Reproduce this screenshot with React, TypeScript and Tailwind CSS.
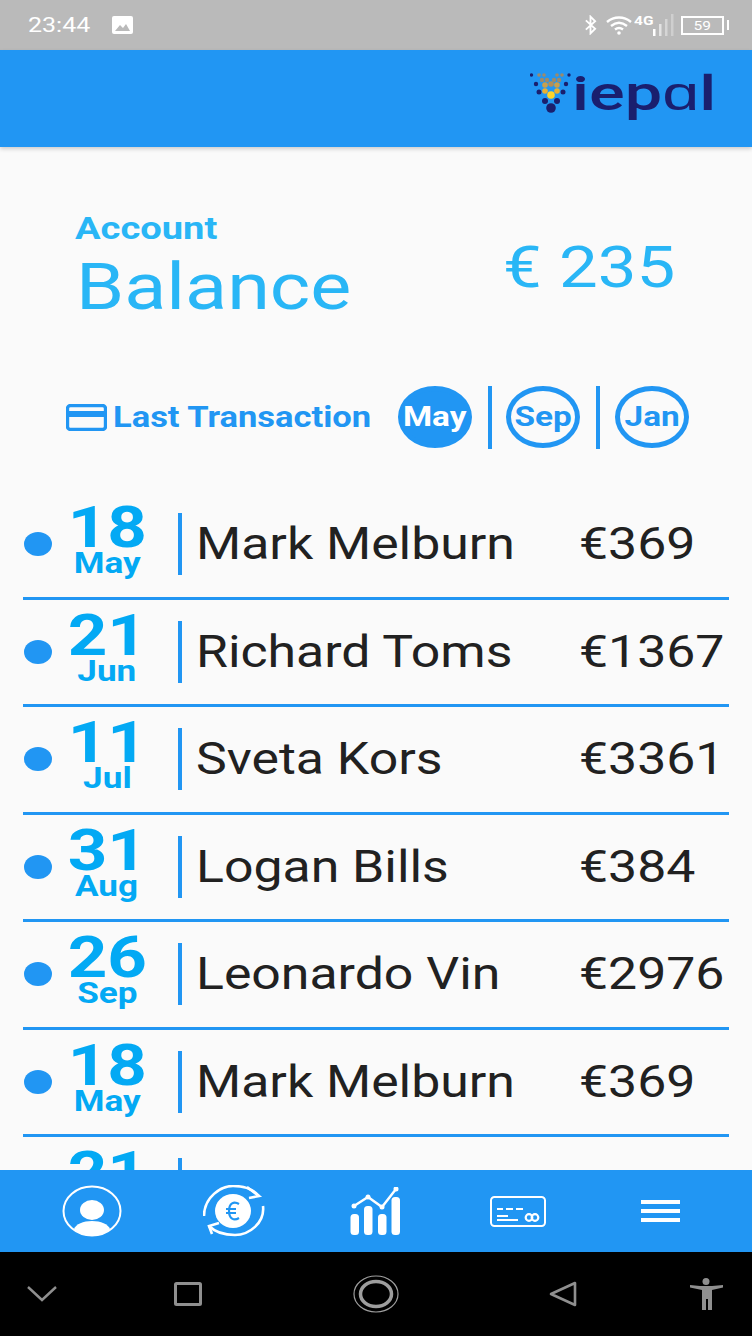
import React from 'react';

const rows = [
  { day: '18', month: 'May', name: 'Mark Melburn', amount: '€369' },
  { day: '21', month: 'Jun', name: 'Richard Toms', amount: '€1367' },
  { day: '11', month: 'Jul', name: 'Sveta Kors', amount: '€3361' },
  { day: '31', month: 'Aug', name: 'Logan Bills', amount: '€384' },
  { day: '26', month: 'Sep', name: 'Leonardo Vin', amount: '€2976' },
  { day: '18', month: 'May', name: 'Mark Melburn', amount: '€369' },
  { day: '21', month: 'Jun', name: 'Richard Toms', amount: '€1367' },
];

// the whole screenshot is stretched sideways, so the text is too
const Wide: React.FC<{ children: React.ReactNode; center?: boolean }> = ({ children, center }) => (
  <span className={`inline-block scale-x-[1.19] whitespace-nowrap ${center ? 'origin-center' : 'origin-left'}`}>
    {children}
  </span>
);

const StatusIcons = () => (
  <div className="flex items-center">
    <svg width="13" height="20" viewBox="0 0 14 20" fill="none" stroke="white" strokeWidth="2">
      <path d="M2 5l10 9-5 5V1l5 5L2 15" />
    </svg>
    <svg className="ml-[9px]" width="26" height="20" viewBox="0 0 26 20" fill="none" stroke="white" strokeWidth="2.400">
      <path d="M1 7c7-6 17-6 24 0M5 11c5-4 11-4 16 0M9 14.500c2.500-2 5.500-2 8 0" />
      <circle cx="13" cy="18" r="1.800" fill="white" stroke="none" />
    </svg>
    <span className="mb-[10px] ml-[2px] w-[18px] text-[13px] leading-none font-bold text-white"><Wide>4G</Wide></span>
    <svg className="ml-[1px]" width="21" height="22" viewBox="0 0 21 22" fill="white">
      <rect x="0" y="15" width="2.500" height="7" />
      <rect x="6" y="10" width="2.500" height="12" opacity=".6" />
      <rect x="12" y="5" width="2.500" height="17" opacity=".4" />
      <rect x="18" y="0" width="2.500" height="22" opacity=".3" />
    </svg>
    <div className="ml-[7px] flex h-[19px] w-[43px] items-center justify-center border-2 border-white">
      <span className="text-[13px] leading-none text-white"><Wide center>59</Wide></span>
    </div>
    <div className="ml-[3px] h-[10px] w-[2px] bg-white" />
  </div>
);

const Logo = () => (
  <div className="flex items-start">
    <svg className="mt-[4px]" width="44" height="42" viewBox="0 0 44 42">
      <g fill="#9c8a6a">
        <circle cx="9" cy="3" r="1.800" /><circle cx="14" cy="3" r="1.800" /><circle cx="27" cy="3" r="1.800" /><circle cx="32" cy="3" r="1.800" />
        <circle cx="12" cy="8" r="2.200" /><circle cx="17" cy="8" r="2.200" /><circle cx="24" cy="8" r="2.200" /><circle cx="29" cy="8" r="2.200" />
      </g>
      <circle cx="15" cy="13" r="2.800" fill="#c9a04a" /><circle cx="21" cy="12" r="2.800" fill="#b08f5a" /><circle cx="27" cy="13" r="2.800" fill="#c9a04a" />
      <circle cx="15" cy="19" r="2.800" fill="#e8b030" /><circle cx="27" cy="19" r="2.800" fill="#e8b030" />
      <circle cx="21" cy="23" r="3.800" fill="#ffd428" />
      <g fill="#1a1f6e">
        <circle cx="1.500" cy="3" r="1.700" /><circle cx="6" cy="12" r="2.200" /><circle cx="36" cy="12" r="2.200" /><circle cx="39" cy="3" r="1.700" />
        <circle cx="9" cy="20" r="2.500" /><circle cx="33" cy="20" r="2.500" />
        <circle cx="15" cy="29" r="3" /><circle cx="27" cy="29" r="3" />
        <circle cx="21" cy="36" r="4.800" />
      </g>
    </svg>
    <span className="-ml-[2px] w-[142px] text-[49px] leading-[52px] font-medium text-[#1a1f6e]">
      <span className="inline-block origin-left scale-x-[1.36]">iepɑl</span>
    </span>
  </div>
);

const MonthBadge: React.FC<{ label: string; active?: boolean }> = ({ label, active }) => (
  <div
    className={`flex h-[62px] w-[74px] shrink-0 items-center justify-center rounded-[50%] border-[5px] border-[#2196f3] text-[28px] font-bold ${
      active ? 'bg-[#2196f3] text-white' : 'text-[#2196f3]'
    }`}
  >
    <Wide center>{label}</Wide>
  </div>
);

const TxRow: React.FC<(typeof rows)[number]> = ({ day, month, name, amount }) => (
  <div className="mx-[23px] flex h-[107.500px] shrink-0 border-b-[3px] border-[#2196f3]">
    <div className="mt-[40px] ml-[1px] h-[24px] w-[28px] shrink-0 rounded-[50%] bg-[#2196f3]" />
    <div className="mt-[13px] flex w-[126px] shrink-0 flex-col items-center pr-[18px] pl-[2px] text-[#03a9f4]">
      <span className="text-[58px] leading-[44px] font-bold"><Wide center>{day}</Wide></span>
      <span className="text-[29.500px] leading-[28px] font-bold"><Wide center>{month}</Wide></span>
    </div>
    <div className="mt-[21px] h-[62px] w-[4px] shrink-0 bg-[#2196f3]" />
    <div className="mt-[27px] ml-[14px] w-[383px] shrink-0 text-[43.500px] leading-[52px] text-[#212121]">
      <Wide>{name}</Wide>
    </div>
    <div className="mt-[27px] text-[43.500px] leading-[52px] text-[#212121]">
      <Wide>{amount}</Wide>
    </div>
  </div>
);

const NavIcons = () => (
  <div className="grid h-[82px] shrink-0 grid-cols-5 bg-[#2196f3] px-[21px]">
    <div className="flex items-center justify-center">
      <svg width="60" height="52" viewBox="0 0 60 52">
        <ellipse cx="30" cy="26" rx="28.500" ry="24.500" fill="none" stroke="white" strokeWidth="2" />
        <ellipse cx="30" cy="25" rx="12" ry="10" fill="white" />
        <path d="M12 44c2-5 9-8 18-8s16 3 18 8c-4 4-11 7-18 7s-14-3-18-7z" fill="white" />
      </svg>
    </div>
    <div className="flex items-center justify-center">
      <svg width="62" height="52" viewBox="0 0 62 52" fill="none" stroke="white" strokeWidth="2.600">
        <ellipse cx="30" cy="26" rx="18" ry="17" fill="white" stroke="none" />
        <path d="M36 19c-5-3-10-1-10 7s5 10 10 7M23 24h10M23 28h10" stroke="#2196f3" strokeWidth="2.200" />
        <path d="M1 31C1 12 18 1 30 1c10 0 20 3 26 10" />
        <path d="M44 2l12 9-10 2" />
        <path d="M60 21c2 17-14 29-28 29-10 0-20-3-26-9" />
        <path d="M16 38L6 41l3 8" />
      </svg>
    </div>
    <div className="flex items-center justify-center">
      <svg width="52" height="48" viewBox="0 0 52 48" fill="white">
        <rect x="0.500" y="27" width="8.500" height="21" rx="3.500" />
        <rect x="14" y="19" width="8.500" height="29" rx="3.500" />
        <rect x="28" y="27" width="8.500" height="21" rx="3.500" />
        <rect x="41.500" y="10" width="8.500" height="38" rx="3.500" />
        <path d="M4 19l14-9 14 10 14-18" fill="none" stroke="white" strokeWidth="2.400" />
        <circle cx="4" cy="19" r="2.500" /><circle cx="18" cy="10" r="2.500" /><circle cx="32" cy="20" r="2.500" /><circle cx="46" cy="2" r="2.500" />
      </svg>
    </div>
    <div className="flex items-center justify-center">
      <svg width="56" height="31" viewBox="0 0 56 31" fill="none" stroke="white">
        <rect x="1" y="1" width="54" height="29" rx="3.500" strokeWidth="2" />
        <path d="M7 13h6M16 13h7M26 13h7" strokeWidth="1.800" />
        <path d="M7 20h11M7 24h21" strokeWidth="2" />
        <circle cx="39" cy="21.500" r="3.300" strokeWidth="2.200" />
        <circle cx="45" cy="21.500" r="3.300" strokeWidth="2.200" />
      </svg>
    </div>
    <div className="flex items-center justify-center">
      <div className="flex w-[39px] flex-col gap-[5px]">
        <div className="h-[4px] bg-white" />
        <div className="h-[4px] bg-white" />
        <div className="h-[4px] bg-white" />
      </div>
    </div>
  </div>
);

export default function App() {
  return (
    <div className="flex h-[1336px] w-[752px] flex-col overflow-hidden bg-[#fafafa] font-['Roboto',sans-serif]">
      {/* status bar */}
      <div className="flex h-[50px] shrink-0 items-center justify-between bg-[#bababa] pr-[23px] pl-[28px]">
        <div className="flex items-center">
          <span className="w-[84px] text-[21px] leading-none text-white"><Wide>23:44</Wide></span>
          <svg width="21" height="18" viewBox="0 0 21 18">
            <rect width="21" height="18" rx="2" fill="white" />
            <path d="M3 15l5-6 3 3 3-4 4 7z" fill="#bababa" />
          </svg>
        </div>
        <StatusIcons />
      </div>

      {/* header */}
      <div className="z-10 flex h-[97px] shrink-0 items-start justify-end bg-[#2196f3] pt-[18px] pr-[38px] shadow-[0_2px_4px_rgba(0,0,0,0.18)]">
        <Logo />
      </div>

      {/* balance */}
      <div className="flex h-[239px] shrink-0 pt-[63px] pl-[75px]">
        <div className="w-[428px] text-[#29b6f6]">
          <div className="text-[32px] leading-[36px] font-bold"><Wide>Account</Wide></div>
          <div className="mt-[7px] ml-[1px] text-[65px] leading-[68px]"><Wide>Balance</Wide></div>
        </div>
        <div className="mt-[25px] text-[58px] leading-[64px] text-[#29b6f6]"><Wide>€ 235</Wide></div>
      </div>

      {/* last transaction header */}
      <div className="flex h-[62px] shrink-0 items-center pl-[66px]">
        <svg width="41" height="27" viewBox="0 0 41 27">
          <rect x="1.500" y="1.500" width="38" height="24" rx="3" fill="none" stroke="#2196f3" strokeWidth="3.400" />
          <rect x="2" y="7" width="37" height="6" fill="#2196f3" />
        </svg>
        <span className="mt-[2px] ml-[6px] w-[285px] shrink-0 text-[29px] font-bold text-[#2196f3]"><Wide>Last Transaction</Wide></span>
        <MonthBadge label="May" active />
        <div className="mr-[14px] ml-[16px] h-[63px] w-[4px] shrink-0 bg-[#2196f3]" />
        <MonthBadge label="Sep" />
        <div className="mr-[15px] ml-[16px] h-[63px] w-[4px] shrink-0 bg-[#2196f3]" />
        <MonthBadge label="Jan" />
      </div>

      {/* transactions */}
      <div className="mt-[44px] flex min-h-0 flex-1 flex-col overflow-hidden">
        {rows.map((r, i) => (
          <TxRow key={i} {...r} />
        ))}
      </div>

      <NavIcons />

      {/* android nav */}
      <div className="flex h-[84px] shrink-0 items-center bg-black pb-[1px]">
        <svg className="ml-[27px]" width="30" height="16" viewBox="0 0 30 16" fill="none" stroke="#8f8f8f" strokeWidth="2.400">
          <path d="M1 1l14 13L29 1" />
        </svg>
        <svg className="ml-[117px]" width="28" height="24" viewBox="0 0 28 24" fill="none" stroke="#8f8f8f" strokeWidth="3">
          <rect x="1.500" y="1.500" width="25" height="21" rx="1" />
        </svg>
        <svg className="ml-[151px]" width="46" height="38" viewBox="0 0 46 38" fill="none" stroke="#9e9e9e">
          <ellipse cx="23" cy="19" rx="22" ry="18" strokeWidth="1.200" />
          <ellipse cx="23" cy="19" rx="15.500" ry="12.500" strokeWidth="3.500" />
        </svg>
        <svg className="ml-[150px]" width="28" height="26" viewBox="0 0 28 26" fill="none" stroke="#8f8f8f" strokeWidth="2.600">
          <path d="M26 2v22L2 13z" strokeLinejoin="round" />
        </svg>
        <svg className="ml-[113px]" width="35" height="32" viewBox="0 0 35 32" fill="#8f8f8f">
          <circle cx="16" cy="3.500" r="3.500" />
          <path d="M0 7l10 1h12l11-1v2.500l-11 2.500v20h-4V21h-2v11h-4V12L0 9.500z" />
        </svg>
      </div>
    </div>
  );
}
